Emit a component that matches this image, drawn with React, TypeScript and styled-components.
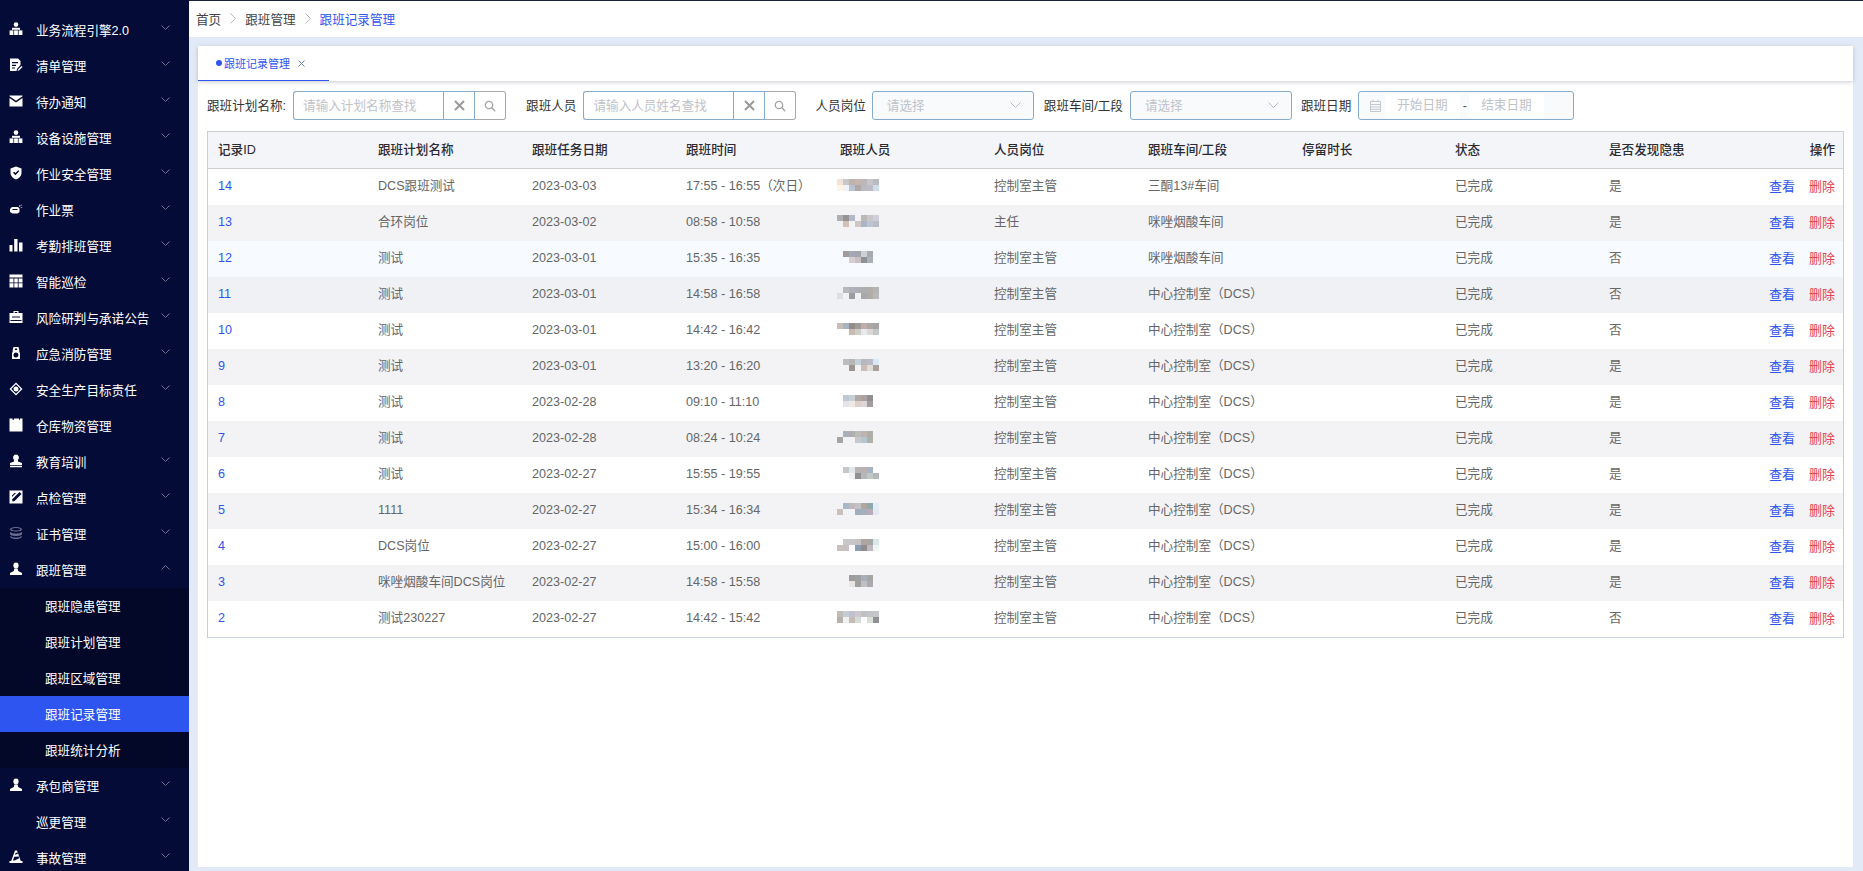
import React from "react";
import styled, { createGlobalStyle } from "styled-components";

const GlobalStyle = createGlobalStyle`
  html, body {
    margin: 0;
    padding: 0;
    height: 100%;
    overflow: hidden;
    font-family: "Liberation Sans", "Noto Sans CJK SC", sans-serif;
    font-size: 12.6px;
  }
  * { box-sizing: border-box; }
`;

const blue = "#2f55f0";

const Shell = styled.div`
  display: flex;
  width: 1863px;
  height: 871px;
  overflow: hidden;
`;

/* ---------- sidebar ---------- */

const Sidebar = styled.aside`
  width: 189px;
  flex: none;
  height: 100%;
  overflow: hidden;
  padding-top: 12px;
  background: #040b37;
  color: #fff;
`;

const MenuRow = styled.div<{ $sub?: boolean; $active?: boolean }>`
  display: flex;
  align-items: center;
  height: 36px;
  padding-left: ${(p) => (p.$sub ? "45px" : "9px")};
  padding-right: 19px;
  padding-bottom: 2px;
  background: ${(p) => (p.$active ? blue : "transparent")};
  white-space: nowrap;
`;

const MenuIcon = styled.svg<{ $dim?: boolean }>`
  width: 14px;
  height: 14px;
  flex: none;
  margin-right: 13px;
  fill: ${(p) => (p.$dim ? "#6d7190" : "#fff")};
`;

const MenuText = styled.span`
  flex: 1;
`;

const Chevron = styled.svg`
  width: 9px;
  height: 5px;
  flex: none;
  margin-top: -3px;
  fill: none;
  stroke: #6c7089;
  stroke-width: 1;
`;

const SubMenu = styled.div`
  background: #030828;
`;

/* ---------- main ---------- */

const Main = styled.main`
  flex: 1;
  min-width: 0;
  display: flex;
  flex-direction: column;
  background: #e3eaf7;
`;

const Breadcrumb = styled.nav`
  display: flex;
  align-items: center;
  height: 37px;
  flex: none;
  padding: 0 7px 2px;
  background: #fff;
  border-top: 1px solid #1c2138;
  color: #444;
`;

const Crumb = styled.span<{ $current?: boolean }>`
  color: ${(p) => (p.$current ? blue : "#444")};
`;

const CrumbSep = styled.svg`
  width: 6px;
  height: 11px;
  margin: 0 9px;
  fill: none;
  stroke: #b5b8c0;
  stroke-width: 1;
`;

const Panel = styled.section`
  flex: 1;
  margin: 9px 10px 4px 9px;
  background: #fff;
  display: flex;
  flex-direction: column;
  min-height: 0;
`;

const TabBar = styled.div`
  height: 35px;
  flex: none;
  display: flex;
  box-shadow: 0 1px 4px rgba(60, 70, 100, 0.28);
`;

const Tab = styled.div`
  width: 131px;
  height: 35px;
  display: flex;
  align-items: center;
  padding-left: 18px;
  border-bottom: 1px solid ${blue};
  color: ${blue};
  font-size: 11px;
`;

const TabDot = styled.span`
  width: 6px;
  height: 6px;
  border-radius: 50%;
  background: ${blue};
  margin-right: 2px;
`;

const TabClose = styled.svg`
  width: 7px;
  height: 7px;
  margin-left: 8px;
  stroke: #6f7fb8;
  stroke-width: 1;
`;

const FilterRow = styled.div`
  display: flex;
  align-items: center;
  height: 29px;
  margin: 10px 0 11px 9px;
  color: #333;
  white-space: nowrap;
`;

const Filter = styled.div<{ $gap: number; $after: number }>`
  display: flex;
  align-items: center;
  gap: ${(p) => p.$gap}px;
  margin-right: ${(p) => p.$after}px;
`;

const FilterLabel = styled.span`
  padding-bottom: 2px;
`;

const SearchBox = styled.div`
  display: flex;
  height: 29px;
`;

const SearchInput = styled.div<{ $w: number }>`
  width: ${(p) => p.$w}px;
  display: flex;
  align-items: center;
  padding: 0 0 2px 9px;
  border: 1px solid #84abcd;
  border-right: none;
  border-radius: 3px 0 0 3px;
  color: #bfc2c9;
`;

const ClearButton = styled.div`
  width: 32px;
  display: flex;
  align-items: center;
  justify-content: center;
  border: 1px solid #84abcd;
`;

const SearchButton = styled.div`
  width: 31px;
  display: flex;
  align-items: center;
  justify-content: center;
  border: 1px solid #a9a9a9;
  border-left: none;
  border-radius: 0 3px 3px 0;
`;

const Select = styled.div<{ $w: number }>`
  width: ${(p) => p.$w}px;
  height: 29px;
  display: flex;
  align-items: center;
  justify-content: space-between;
  padding: 0 12px 2px 14px;
  border: 1px solid #84abcd;
  border-radius: 3px;
  background: #f8fafc;
  color: #bfc2c9;
`;

const SelectArrow = styled.svg`
  width: 11px;
  height: 6px;
  fill: none;
  stroke: #b6bcc6;
  stroke-width: 1;
`;

const DateRange = styled.div`
  width: 216px;
  height: 29px;
  display: flex;
  align-items: center;
  padding-left: 11px;
  border: 1px solid #84abcd;
  border-radius: 3px;
  background: #f8fafc;
  color: #bfc2c9;
`;

const DateIcon = styled.svg`
  width: 11px;
  height: 13px;
  flex: none;
  fill: none;
  stroke: #c4c8ce;
  stroke-width: 1;
  margin-right: 4px;
`;

const DateInput = styled.div<{ $w: number }>`
  width: ${(p) => p.$w}px;
  height: 24px;
  line-height: 22px;
  padding-left: 12px;
  background: #fff;
`;

const DateDash = styled.span`
  width: 9px;
  text-align: center;
  color: #555;
`;

/* ---------- table ---------- */

const Table = styled.div`
  margin-left: 9px;
  width: 1637px;
  border: 1px solid #cdced2;
  border-bottom-color: #cfd6e6;
  color: #666;
`;

const columns = "160px 154px 154px 154px 154px 154px 154px 153px 154px 100px 1fr";

const HeadRow = styled.div`
  display: grid;
  grid-template-columns: ${columns};
  height: 37px;
  align-items: center;
  background: #f3f5f9;
  border-bottom: 1px solid #cdced2;
  color: #2b2b33;
  font-weight: 500;
`;

const BodyRow = styled.div<{ $bg: string }>`
  display: grid;
  grid-template-columns: ${columns};
  height: 36px;
  align-items: center;
  background: ${(p) => p.$bg};
`;

// digits sit higher in the line box than CJK text, hence the smaller padding
const Cell = styled.div<{ $latin?: boolean }>`
  padding: 0 0 ${(p) => (p.$latin ? "4px" : "7px")} 10px;
  white-space: nowrap;
`;

const HeadCell = styled.div<{ $right?: boolean }>`
  padding: 0 ${(p) => (p.$right ? "8px" : "0")} 4px 10px;
  text-align: ${(p) => (p.$right ? "right" : "left")};
`;

const IdLink = styled(Cell)`
  color: ${blue};
`;

const Mosaic = styled.svg`
  display: block;
  width: 42px;
  height: 24px;
  margin-left: -3px;
  margin-top: 6px;
`;

const Actions = styled.div`
  display: flex;
  justify-content: flex-end;
  gap: 14px;
  padding: 0 8px 5px 0;
`;

const ActionLink = styled.a<{ $danger?: boolean }>`
  color: ${(p) => (p.$danger ? "#e8434f" : blue)};
  font-size: 13px;
`;

/* ---------- icons ---------- */

const tree = (
  <>
    <circle cx="7" cy="2.6" r="2.3" />
    <path d="M3 5.8h8v2H3z" />
    <rect x="0.6" y="8.4" width="3.8" height="4.6" />
    <rect x="5.1" y="8.4" width="3.8" height="4.6" />
    <rect x="9.6" y="8.4" width="3.8" height="4.6" />
  </>
);
const person = (
  <>
    <ellipse cx="7" cy="3.4" rx="2.6" ry="3" />
    <path d="M5.4 6.500h3.200l.6 2.400 3.800 2V13H1v-2.100l3.800-2z" />
  </>
);

const menuIcons: Record<string, React.ReactNode> = {
  tree,
  person,
  doc: (
    <path d="M1 .5h8l2.500 2.500v4L8 11l-.5 2H1zM3 4v1.200h6V4zM3 6.800v1.200h4V6.800zM3 9.400v1.200h3V9.400zM9 11.500l3.500-3.500 1 1-3.500 3.500-1.500.5z" fillRule="evenodd" />
  ),
  mail: <path d="M.5 1.500h13v.8L7 6.800.5 2.300zM.5 4l6.500 4.400L13.500 4v8.500H.5z" />,
  shield: (
    <path d="M7 .5l5.500 2v4.800c0 3-2.500 5-5.500 6.200-3-1.200-5.500-3.200-5.500-6.200V2.500zM4 6.800l2.400 2.400 3.800-4-1-1-2.800 2.900-1.400-1.400z" fillRule="evenodd" />
  ),
  ticket: (
    <path d="M3 5h6l1.500 1.500V10l-2 1.500h-5L1 10V7zM3.500 7v1h5V7zM10.500 3l1 1-1.500 1zM12.500 5l1 .5-2 .5zM12 2.500l.8.5-1.300 1.500z" fillRule="evenodd" />
  ),
  bars: <path d="M.5 7h3v6.500h-3zM5.200 1h3.300v12.500H5.200zM10 4.500h3.500v9H10z" />,
  grid: (
    <path d="M.5 .5h13v3h-13zM.5 4.500h4v4h-4zM5.300 4.500h3.500v4H5.300zM9.600 4.500h3.900v4H9.600zM.5 9.300h4v4.200h-4zM5.300 9.300h3.500v4.200H5.300zM9.600 9.300h3.900v4.200H9.600z" />
  ),
  case: (
    <path d="M4.500 3V1h5v2h4v10h-13V3zM5.700 3h2.600V2H5.700zM3 6.500v1h8v-1zM1.500 10v1h11v-1z" fillRule="evenodd" />
  ),
  fire: (
    <path d="M4.500 1h5l.8 3v2l.7 1v6H3V7l.7-1V4zM7 6.500a2.500 2.500 0 1 0 0 5 2.500 2.500 0 0 0 0-5zM6 2.500v1.500h2V2.500z" fillRule="evenodd" />
  ),
  target: (
    <path d="M7 .5L13.500 7 7 13.500.5 7zM7 2.300L2.300 7 7 11.700 11.700 7zM7 4.500a2.500 2.500 0 1 1 0 5 2.500 2.500 0 0 1 0-5z" fillRule="evenodd" />
  ),
  box: <path d="M.5 .5h3v1.200h1.500V.5h5v1.200H11V.5h2.500v13H.5z" />,
  stamp: (
    <path d="M7 .5a3 3 0 0 1 2 5.200V7.500l4 1.500v2H1V9l4-1.500V5.700A3 3 0 0 1 7 .5zM1 11.800h12v1.500H1z" />
  ),
  check: (
    <path d="M.5 .5h13v13H.5zM3 9.500l.6 2 2-.6L12.500 4 10.500 2zM3 7l4-4H5.500L3 5.500z" fillRule="evenodd" />
  ),
  stack: (
    <path d="M7 1c3.500 0 6 1 6 2.300S10.500 5.600 7 5.600 1 4.600 1 3.300 3.500 1 7 1zM7 2C4.800 2 2.400 2.600 2.400 3.300S4.800 4.600 7 4.600s4.600-.6 4.600-1.300S9.200 2 7 2zM1 6l1 .5c1 .8 3 1.200 5 1.200s4-.4 5-1.200l1-.5v1.700c0 1.300-2.500 2.300-6 2.300S1 9 1 7.700zM1 10l1 .5c1 .8 3 1.200 5 1.200s4-.4 5-1.200l1-.5c0 1.900-2.500 3-6 3s-6-1.100-6-3z" fillRule="evenodd" />
  ),
  cone: (
    <path d="M6 .5h2l3.800 10.500h1.700v2H.5v-2h1.700zM6.600 3L6 4.800l3-1-.5-1.300zM5.200 6.800L4 10.500h1.600l4.600-2.200-.5-1.800z" fillRule="evenodd" />
  ),
};

const ChevronIcon = ({ up }: { up?: boolean }) => (
  <Chevron viewBox="0 0 9 5">
    <path d={up ? "M.5 4.500l4-4 4 4" : "M.5 .5l4 4 4-4"} />
  </Chevron>
);

type MenuItem = { label: string; icon?: string; dim?: boolean; noArrow?: boolean };

const menuBefore: MenuItem[] = [
  { label: "业务流程引擎2.0", icon: "tree" },
  { label: "清单管理", icon: "doc" },
  { label: "待办通知", icon: "mail" },
  { label: "设备设施管理", icon: "tree" },
  { label: "作业安全管理", icon: "shield" },
  { label: "作业票", icon: "ticket" },
  { label: "考勤排班管理", icon: "bars" },
  { label: "智能巡检", icon: "grid" },
  { label: "风险研判与承诺公告", icon: "case" },
  { label: "应急消防管理", icon: "fire" },
  { label: "安全生产目标责任", icon: "target" },
  { label: "仓库物资管理", icon: "box", noArrow: true },
  { label: "教育培训", icon: "stamp" },
  { label: "点检管理", icon: "check" },
  { label: "证书管理", icon: "stack", dim: true },
];

const subMenu = ["跟班隐患管理", "跟班计划管理", "跟班区域管理", "跟班记录管理", "跟班统计分析"];

const menuAfter: MenuItem[] = [
  { label: "承包商管理", icon: "person" },
  { label: "巡更管理" },
  { label: "事故管理", icon: "cone" },
];

const renderIcon = (item: MenuItem) => (
  <MenuIcon viewBox="0 0 14 14" $dim={item.dim}>
    {item.icon ? menuIcons[item.icon] : null}
  </MenuIcon>
);

const SideMenu = () => (
  <Sidebar>
    {menuBefore.map((item) => (
      <MenuRow key={item.label}>
        {renderIcon(item)}
        <MenuText>{item.label}</MenuText>
        {!item.noArrow && <ChevronIcon />}
      </MenuRow>
    ))}
    <MenuRow>
      {renderIcon({ label: "", icon: "person" })}
      <MenuText>跟班管理</MenuText>
      <ChevronIcon up />
    </MenuRow>
    <SubMenu>
      {subMenu.map((label) => (
        <MenuRow key={label} $sub $active={label === "跟班记录管理"}>
          {label}
        </MenuRow>
      ))}
    </SubMenu>
    {menuAfter.map((item) => (
      <MenuRow key={item.label}>
        {renderIcon(item)}
        <MenuText>{item.label}</MenuText>
        <ChevronIcon />
      </MenuRow>
    ))}
  </Sidebar>
);

/* ---------- data ---------- */

// pixelated names: two lines of seven cells, "" = no cell
const names: string[][][] = [
  [["f3e3d6", "c8c8cc", "bfb3ae", "c3b5b0", "bdb6b6", "c5c5cc", "b8bcc2"], ["fff4ea", "eef4fa", "b9c2cf", "b0a8a8", "b9b9c2", "bcbcc6", "cfdcea"]],
  [["b0b0b2", "949494", "b5b5cc", "", "bdb8b8", "c8c8cc", "d0d0da"], ["", "d4bfb4", "", "cfc6c6", "a8b6c6", "c0c4d2", "bcbcc4"]],
  [["", "a09a98", "a4a8b8", "a5a5b0", "cfd0d6", "a8aaae", ""], ["", "", "d6ced0", "c8c0c4", "8e9098", "aab0b6", ""]],
  [["", "b8b8ba", "aeb0bc", "aeaeb4", "aeaeb0", "b0ada6", "b4b4b4"], ["dedee4", "f2f2f6", "9c9ca0", "f2f2f6", "a8a8ac", "aeaca4", "b8b8b8"]],
  [["c8beb6", "a8b4c2", "948c88", "a09c98", "c0acaa", "aca8a6", "a4a4a6"], ["", "", "c6bcb2", "d0ccc8", "e8e8ee", "dcd8d6", "c4c8c8"]],
  [["", "bcbcbc", "b6b6b2", "c4d0d8", "b8b8bc", "b8bcc4", "d8e8f6"], ["", "", "9c9690", "", "ccbcb8", "e0dcd8", "a8a09c"]],
  [["", "c0c8d0", "c6ced6", "b4a8a4", "aca0a0", "908e90", ""], ["", "e4e4ea", "f0e8e2", "dcd0cc", "dcd6d8", "a49c9e", ""]],
  [["", "a8b0bc", "b0aeae", "bcbcbc", "c0b4b0", "b0aea8", ""], ["a8a4a4", "", "", "c8c8cc", "b4c6d0", "b0b0a8", ""]],
  [["", "c4c8cc", "e2e6ea", "b8b4b4", "bcb0b0", "a4b4c4", ""], ["", "", "f0f2f4", "909094", "b4b8b8", "c0c8c8", "b4b8b8"]],
  [["", "a8b8c8", "c4b8b8", "c0c4c8", "b0a8a0", "90a8b0", "e4ecf4"], ["c8c0bc", "", "", "a0aebc", "a4b0bc", "b8acb8", "e4e8f0"]],
  [["", "c8c8ca", "c8c6c6", "c4c4c4", "b0a4a0", "a4a8a4", "dce6ea"], ["c8c0bc", "c8c0c0", "", "8c9cb4", "908c8c", "c0b8c0", "eef6f4"]],
  [["", "", "9c9c9c", "9ea0a2", "a8b0bc", "a4a8a0", ""], ["", "", "e8e4e2", "a0a0a0", "c0c0c4", "b0a8b0", ""]],
  [["c0bcb8", "c4ccd8", "c0c0d0", "ccc8cc", "c0c0c8", "c4c4c8", "c4c8c8"], ["b8b0ac", "f0f0f0", "c4bcb4", "d8dcd8", "", "d8e0d8", "909094"]],
];

const rows = [
  ["14", "DCS跟班测试", "2023-03-03", "17:55 - 16:55（次日）", "控制室主管", "三酮13#车间", "是"],
  ["13", "合环岗位", "2023-03-02", "08:58 - 10:58", "主任", "咪唑烟酸车间", "是"],
  ["12", "测试", "2023-03-01", "15:35 - 16:35", "控制室主管", "咪唑烟酸车间", "否"],
  ["11", "测试", "2023-03-01", "14:58 - 16:58", "控制室主管", "中心控制室（DCS）", "否"],
  ["10", "测试", "2023-03-01", "14:42 - 16:42", "控制室主管", "中心控制室（DCS）", "否"],
  ["9", "测试", "2023-03-01", "13:20 - 16:20", "控制室主管", "中心控制室（DCS）", "是"],
  ["8", "测试", "2023-02-28", "09:10 - 11:10", "控制室主管", "中心控制室（DCS）", "是"],
  ["7", "测试", "2023-02-28", "08:24 - 10:24", "控制室主管", "中心控制室（DCS）", "是"],
  ["6", "测试", "2023-02-27", "15:55 - 19:55", "控制室主管", "中心控制室（DCS）", "是"],
  ["5", "1111", "2023-02-27", "15:34 - 16:34", "控制室主管", "中心控制室（DCS）", "是"],
  ["4", "DCS岗位", "2023-02-27", "15:00 - 16:00", "控制室主管", "中心控制室（DCS）", "是"],
  ["3", "咪唑烟酸车间DCS岗位", "2023-02-27", "14:58 - 15:58", "控制室主管", "中心控制室（DCS）", "是"],
  ["2", "测试230227", "2023-02-27", "14:42 - 15:42", "控制室主管", "中心控制室（DCS）", "否"],
];

const isLatin = (text: string) => /^[\x00-\x7f]+$/.test(text);

const rowBg = (i: number) => {
  if (i === 2) return "#f7fbff";
  if (i === 3) return "#f0f1f5";
  return i % 2 === 0 ? "#fff" : "#f3f3f6";
};

const heads = ["记录ID", "跟班计划名称", "跟班任务日期", "跟班时间", "跟班人员", "人员岗位", "跟班车间/工段", "停留时长", "状态", "是否发现隐患"];

const NameMosaic = ({ cells }: { cells: string[][] }) => (
  <Mosaic viewBox="0 0 42 24">
    {cells.map((line, y) =>
      line.map((c, x) => (c ? <rect key={`${x}-${y}`} x={x * 6} y={y * 6 + 4} width="6" height="6" fill={`#${c}`} /> : null))
    )}
  </Mosaic>
);

const ClearIcon = () => (
  <svg width="11" height="11" viewBox="0 0 11 11" stroke="#9a9a9a" strokeWidth="2">
    <path d="M1 1l9 9M10 1l-9 9" />
  </svg>
);

const SearchIcon = () => (
  <svg width="12" height="12" viewBox="0 0 12 12" fill="none" stroke="#a3a3a3" strokeWidth="1.300">
    <circle cx="5" cy="5" r="3.700" />
    <path d="M7.800 7.800l3.400 3.400" />
  </svg>
);

const ArrowDown = () => (
  <SelectArrow viewBox="0 0 11 6">
    <path d="M.5 .5l5 5 5-5" />
  </SelectArrow>
);

export default function App() {
  return (
    <Shell>
      <GlobalStyle />
      <SideMenu />
      <Main>
        <Breadcrumb>
          <Crumb>首页</Crumb>
          <CrumbSep viewBox="0 0 6 11"><path d="M.5 .5l5 5-5 5" /></CrumbSep>
          <Crumb>跟班管理</Crumb>
          <CrumbSep viewBox="0 0 6 11"><path d="M.5 .5l5 5-5 5" /></CrumbSep>
          <Crumb $current>跟班记录管理</Crumb>
        </Breadcrumb>
        <Panel>
          <TabBar>
            <Tab>
              <TabDot />
              跟班记录管理
              <TabClose viewBox="0 0 7 7"><path d="M.5 .5l6 6M6.500 .5l-6 6" /></TabClose>
            </Tab>
          </TabBar>
          <FilterRow>
            <Filter $gap={7} $after={20}>
              <FilterLabel>跟班计划名称:</FilterLabel>
              <SearchBox>
                <SearchInput $w={150}>请输入计划名称查找</SearchInput>
                <ClearButton><ClearIcon /></ClearButton>
                <SearchButton><SearchIcon /></SearchButton>
              </SearchBox>
            </Filter>
            <Filter $gap={7} $after={19}>
              <FilterLabel>跟班人员</FilterLabel>
              <SearchBox>
                <SearchInput $w={150}>请输入人员姓名查找</SearchInput>
                <ClearButton><ClearIcon /></ClearButton>
                <SearchButton><SearchIcon /></SearchButton>
              </SearchBox>
            </Filter>
            <Filter $gap={6} $after={10}>
              <FilterLabel>人员岗位</FilterLabel>
              <Select $w={162}>请选择<ArrowDown /></Select>
            </Filter>
            <Filter $gap={7} $after={9}>
              <FilterLabel>跟班车间/工段</FilterLabel>
              <Select $w={162}>请选择<ArrowDown /></Select>
            </Filter>
            <Filter $gap={7} $after={0}>
              <FilterLabel>跟班日期</FilterLabel>
              <DateRange>
                <DateIcon viewBox="0 0 11 13">
                  <path d="M.5 2.500h10v10H.5zM.5 5.500h10M.5 8h10M.5 10.300h10M3 .5v2M8 .5v2" />
                </DateIcon>
                <DateInput $w={75}>开始日期</DateInput>
                <DateDash>-</DateDash>
                <DateInput $w={75}>结束日期</DateInput>
              </DateRange>
            </Filter>
          </FilterRow>
          <Table>
            <HeadRow>
              {heads.map((h) => <HeadCell key={h}>{h}</HeadCell>)}
              <HeadCell $right>操作</HeadCell>
            </HeadRow>
            {rows.map((r, i) => (
              <BodyRow key={r[0]} $bg={rowBg(i)}>
                <IdLink $latin>{r[0]}</IdLink>
                <Cell $latin={isLatin(r[1])}>{r[1]}</Cell>
                <Cell $latin>{r[2]}</Cell>
                <Cell $latin={isLatin(r[3])}>{r[3]}</Cell>
                <Cell><NameMosaic cells={names[i]} /></Cell>
                <Cell>{r[4]}</Cell>
                <Cell>{r[5]}</Cell>
                <Cell />
                <Cell>已完成</Cell>
                <Cell>{r[6]}</Cell>
                <Actions>
                  <ActionLink>查看</ActionLink>
                  <ActionLink $danger>删除</ActionLink>
                </Actions>
              </BodyRow>
            ))}
          </Table>
        </Panel>
      </Main>
    </Shell>
  );
}
